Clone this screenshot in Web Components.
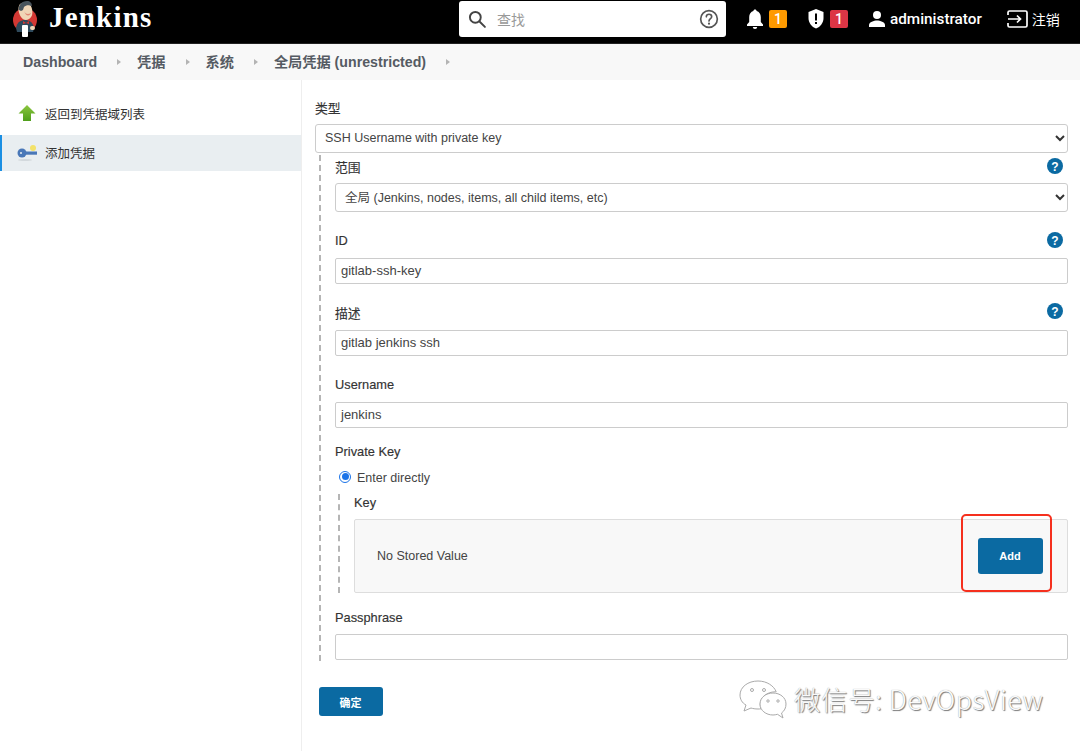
<!DOCTYPE html>
<html lang="zh">
<head>
<meta charset="utf-8">
<title>Jenkins</title>
<style>
  html, body { margin: 0; padding: 0; background: #fff; }
  body {
    width: 1080px; height: 751px; overflow: hidden; position: relative;
    font: 13px "Liberation Sans", "Noto Sans CJK SC", sans-serif; color: #333;
  }
  .page { display: flex; height: 671px; }
</style>
</head>
<body>
<jk-header></jk-header>
<jk-breadcrumb>
  <span>Dashboard</span><span>凭据</span><span>系统</span><span>全局凭据 (unrestricted)</span>
</jk-breadcrumb>
<div class="page">
  <jk-sidebar></jk-sidebar>
  <jk-form></jk-form>
</div>
<jk-watermark></jk-watermark>

<script>
// barra superior negra
class JkHeader extends HTMLElement {
  constructor() {
    super();
    this.attachShadow({ mode: "open" });
    this.shadowRoot.innerHTML = `
    <style>
      :host { display: flex; align-items: center; height: 43px; background: #000; color: #fff; border-bottom: 1px solid #222;
        font-family: Roboto, "Noto Sans CJK SC", sans-serif; }
      .logo { margin-left: 12px; width: 27px; height: 37px; flex: none; margin-top: -4px; }
      .name { margin-left: 10px; width: 104px; font: bold 29px "Liberation Serif", serif; letter-spacing: 1.2px; flex: none; white-space: nowrap; margin-top: -8px; }
      .search { margin-left: 306px; width: 267px; height: 36px; margin-top: -5px; background: #fff; border-radius: 3px; display: flex; align-items: center; flex: none; color: #999; font-size: 14px; }
      .search .mag { margin-left: 8px; }
      .search span { margin-left: 10px; flex: 1; }
      .search .q { margin-right: 7px; }
      .bell { margin-left: 20px; }
      .badge { width: 18px; height: 18px; border-radius: 2px; background: #fe9a00; font: 500 14px/18px Roboto, sans-serif; text-align: center; flex: none; margin-left: 5px; margin-top: -5px; }
      .badge.red { background: #dc3545; }
      .shield { margin-left: 20px; }
      .bell, .shield, .user, .out { flex: none; margin-top: -5px; }
      .user { margin-left: 20px; }
      .who { margin-left: 4px; font-weight: 500; font-size: 15.3px; margin-top: -5px; }
      .out { margin-left: 25px; }
      .quit { margin-left: 4px; font-size: 14px; margin-top: -5px; }
    </style>
    <svg class="logo" viewBox="0 0 27 37">
      <circle cx="13" cy="19" r="12" fill="#d33833"/>
      <path d="M4 27c1-6 5-8 9-8s8 2 9 8l-1 4H5z" fill="#2f4a5c"/>
      <path d="M8 3c4-3 11-2 12 5 1 5 0 8-3 10-3 2-6 1-8-2-2-3-4-9-1-13z" fill="#f0d6b7"/>
      <path d="M7 9C6 4 10 0 15 0c3 0 5 2 5 5-3-1-6-1-8 1l-1 3-2 1z" fill="#49545c"/>
      <path d="M12 10c1 3 4 4 7 2-1 3-5 4-7-2z" fill="#d33833" opacity=".5"/>
      <path d="M11 20l3 2 3-2v3l-3-1-3 1z" fill="#d33833"/>
      <rect x="10" y="24" width="6" height="12" rx="1" fill="#fff"/>
      <rect x="18" y="25" width="5" height="4" rx="2" fill="#f0d6b7"/>
    </svg>
    <div class="name">Jenkins</div>
    <div class="search">
      <svg class="mag" width="20" height="20" viewBox="0 0 24 24" fill="none" stroke="#444" stroke-width="2.3" stroke-linecap="round"><circle cx="10" cy="10" r="6.5"/><path d="M15 15l6.500 6.500"/></svg>
      <span>查找</span>
      <svg class="q" width="20" height="20" viewBox="0 0 24 24" fill="none" stroke="#555" stroke-width="2"><circle cx="12" cy="12" r="10"/><path d="M8.800 9.400c0-1.900 1.400-3.100 3.200-3.100s3.200 1.200 3.200 2.900c0 2.400-3.200 2.500-3.200 5.300" stroke-linecap="round"/><circle cx="12" cy="17.600" r="1.300" fill="#555" stroke="none"/></svg>
    </div>
    <svg class="bell" width="18" height="20" viewBox="0 0 18 20" fill="#fff"><path d="M9 .5c-1 0-1.600.7-1.600 1.600C4.800 2.900 3.200 5.200 3.200 8v5L1 15.600V17h16v-1.400L14.800 13V8c0-2.800-1.600-5.100-4.200-5.900C10.600 1.200 10 .5 9 .5z"/><path d="M6.800 18a2.200 2 0 0 0 4.400 0z"/></svg>
    <div class="badge">1</div>
    <svg class="shield" width="18" height="20" viewBox="0 0 18 20"><path d="M9 0L1.500 3v6c0 5 3.200 9 7.500 10.500C13.300 18 16.500 14 16.500 9V3z" fill="#fff"/><rect x="8" y="4.500" width="2" height="7" fill="#000"/><rect x="8" y="13" width="2" height="2" fill="#000"/></svg>
    <div class="badge red">1</div>
    <svg class="user" width="18" height="18" viewBox="0 0 18 18" fill="#fff"><circle cx="9" cy="5" r="4"/><path d="M1 17v-2c0-3 5-4.500 8-4.500s8 1.500 8 4.500v2z"/></svg>
    <div class="who">administrator</div>
    <svg class="out" width="21" height="18" viewBox="0 0 21 18" fill="none" stroke="#fff" stroke-width="1.700"><path d="M1 5V2.500A1.500 1.500 0 0 1 2.500 1h16A1.500 1.500 0 0 1 20 2.500v13a1.500 1.500 0 0 1-1.500 1.500h-16A1.500 1.500 0 0 1 1 15.500V13"/><path d="M1 9h12M10 5.500L13.500 9 10 12.500"/></svg>
    <div class="quit">注销</div>
    `;
  }
}

// migas de pan
class JkBreadcrumb extends HTMLElement {
  constructor() {
    super();
    this.attachShadow({ mode: "open" });
    this.shadowRoot.innerHTML = `
    <style>
      :host { display: block; height: 36px; background: #f8f8f8; }
      slot { display: flex; align-items: center; height: 36px; padding-left: 23px; font: bold 14.2px/36px "Liberation Sans", "Noto Sans CJK SC", sans-serif; color: #555b63; }
      ::slotted(span) { margin-right: 39px; }
    </style>
    <slot></slot>
    `;
    // las flechitas van en el documento porque ::after no cruza el slot
    this.querySelectorAll("span").forEach((s) => {
      s.insertAdjacentHTML("afterend", `<jk-chevron></jk-chevron>`);
    });
  }
}

class JkChevron extends HTMLElement {
  constructor() {
    super();
    this.attachShadow({ mode: "open" });
    this.shadowRoot.innerHTML = `
    <style>
      :host { display: block; width: 4px; height: 7px; margin: 0 16px 0 -19px; }
      i { display: block; width: 0; height: 0; border-left: 4px solid #b4b4b4; border-top: 3.5px solid transparent; border-bottom: 3.5px solid transparent; }
    </style>
    <i></i>
    `;
  }
}

// columna izquierda
class JkSidebar extends HTMLElement {
  constructor() {
    super();
    this.attachShadow({ mode: "open" });
    this.shadowRoot.innerHTML = `
    <style>
      :host { display: block; width: 301px; flex: none; border-right: 1px solid #eee; padding-top: 15px; box-sizing: content-box; }
      .item { display: flex; align-items: center; height: 36px; padding-left: 16px; gap: 7px; font-size: 12.5px; color: #333; border-left: 2px solid transparent; }
      .item.active { background: #e9eef1; border-left-color: #1b8fe3; margin-top: 4px; }
      .item.active span { margin-top: -2px; }
      .item svg { flex: none; width: 22px; height: 20px; margin-left: -2px; }
    </style>
    <div class="item">
      <svg viewBox="0 0 22 20">
        <defs><linearGradient id="up" x1="0" y1="0" x2="0" y2="1"><stop offset="0" stop-color="#8cc63f"/><stop offset="1" stop-color="#4f9e1b"/></linearGradient></defs>
        <path d="M11 2l8.500 8.500H15V18H7v-7.500H2.500z" fill="url(#up)"/>
      </svg>
      <span>返回到凭据域列表</span>
    </div>
    <div class="item active">
      <svg viewBox="0 0 22 20"><circle cx="17" cy="5" r="3" fill="#f3e26a"/><circle cx="6" cy="10" r="4.500" fill="#4a78b8"/><rect x="8" y="8.500" width="13" height="3.200" fill="#4a78b8"/><circle cx="5" cy="10" r="1" fill="#e9eef1"/><ellipse cx="9" cy="17" rx="7" ry="1" fill="#d3d9dd"/></svg>
      <span>添加凭据</span>
    </div>
    `;
  }
}

// etiqueta + control, con ayuda opcional
class JkField extends HTMLElement {
  constructor() {
    super();
    this.attachShadow({ mode: "open" });
    const help = this.hasAttribute("help")
      ? `<svg width="16" height="16" viewBox="0 0 16 16"><circle cx="8" cy="8" r="8" fill="#0b6aa2"/><text x="8" y="12.500" text-anchor="middle" font-family="Liberation Sans" font-weight="700" font-size="12" fill="#fff">?</text></svg>`
      : "";
    this.shadowRoot.innerHTML = `
    <style>
      :host { display: block; }
      .top { display: flex; justify-content: space-between; align-items: center; height: 18px; margin-bottom: var(--gap, 7px); padding-right: 5px; }
      label { font-size: 12.8px; color: #333; -webkit-text-stroke: .15px #333; margin-top: -2px; }
      svg { margin-top: var(--help, -2px); }
    </style>
    <div class="top"><label>${this.getAttribute("label")}</label>${help}</div>
    <slot></slot>
    `;
  }
}

class JkSelect extends HTMLElement {
  constructor() {
    super();
    this.attachShadow({ mode: "open" });
    this.shadowRoot.innerHTML = `
    <style>
      :host { display: flex; align-items: center; justify-content: space-between; height: 29px; box-sizing: border-box; border: 1px solid #ccc; border-radius: 3px; padding: 0 2px 2px var(--pad, 9px); background: #fff; color: #444; font-size: 12.5px; }
      svg { flex: none; margin-top: 2px; }
    </style>
    <slot></slot>
    <svg width="10" height="7" viewBox="0 0 10 7" fill="none" stroke="#333" stroke-width="2"><path d="M1 1l4 4 4-4"/></svg>
    `;
  }
}

class JkInput extends HTMLElement {
  constructor() {
    super();
    this.attachShadow({ mode: "open" });
    this.shadowRoot.innerHTML = `
    <style>
      :host { display: flex; align-items: center; height: 26px; box-sizing: border-box; border: 1px solid #ccc; border-radius: 2px; padding: 0 5px 2px; background: #fff; color: #444; font-size: 13px; }
    </style>
    <slot></slot>
    `;
  }
}

class JkButton extends HTMLElement {
  constructor() {
    super();
    this.attachShadow({ mode: "open" });
    this.shadowRoot.innerHTML = `
    <style>
      :host { display: flex; align-items: center; justify-content: center; box-sizing: border-box; background: #0b6aa2; border-radius: 3px; color: #fff; font-size: 11px; font-weight: 700; padding-right: 1px; }
    </style>
    <slot></slot>
    `;
  }
}

// el formulario
class JkForm extends HTMLElement {
  constructor() {
    super();
    this.attachShadow({ mode: "open" });
    this.shadowRoot.innerHTML = `
    <style>
      :host { display: block; flex: 1; padding: 19px 12px 0 13px; box-sizing: border-box; --pad: 9px; }
      .nest { margin: 2px 0 0 4px; padding: 3px 0 0 14px; border-left: 2px dashed #b5b5b5; height: 506px; box-sizing: border-box; }
      jk-field { margin-top: 20px; }
      jk-field.first { margin-top: 0; }
      .radio { display: flex; align-items: center; height: 18px; margin: 8px 0 0 4px; gap: 6px; color: #444; font-size: 12.5px; }
      .dot { width: 12px; height: 12px; border-radius: 50%; background: #fff; border: 1.500px solid #1a73e8; box-sizing: border-box; display: flex; align-items: center; justify-content: center; margin-top: -3px; }
      .dot i { display: block; width: 7px; height: 7px; border-radius: 50%; background: #1a73e8; }
      .sub { margin: 7px 0 0 3px; padding-left: 14px; border-left: 2px dashed #b5b5b5; }
      .box { position: relative; height: 74px; box-sizing: border-box; border: 1px solid #ddd; border-radius: 2px; background: #f8f8f8; display: flex; align-items: center; justify-content: space-between; padding: 0 24px 0 22px; color: #444; font-size: 12.5px; }
      .box jk-button { width: 65px; height: 36px; }
      .mark { position: absolute; left: 606px; top: -6px; width: 91px; height: 78px; box-sizing: border-box; border: 2px solid #f5301e; border-radius: 5px; }
      .ok { margin: 26px 0 0 4px; width: 64px; height: 29px; }
    </style>
    <jk-field class="first" label="类型" style="--gap:7px">
      <jk-select>SSH Username with private key</jk-select>
    </jk-field>
    <div class="nest">
      <jk-field class="first" label="范围" help>
        <jk-select>全局 (Jenkins, nodes, items, all child items, etc)</jk-select>
      </jk-field>
      <jk-field label="ID" help style="--gap:8px"><jk-input>gitlab-ssh-key</jk-input></jk-field>
      <jk-field label="描述" help style="--gap:8px;--help:-5px"><jk-input>gitlab jenkins ssh</jk-input></jk-field>
      <jk-field label="Username" style="--gap:8px"><jk-input>jenkins</jk-input></jk-field>
      <jk-field label="Private Key" style="margin-top:15px">
        <div class="radio"><span class="dot"><i></i></span><span>Enter directly</span></div>
        <div class="sub">
          <jk-field class="first" label="Key">
            <div class="box">
              <span>No Stored Value</span>
              <jk-button>Add</jk-button>
              <div class="mark"></div>
            </div>
          </jk-field>
        </div>
      </jk-field>
      <jk-field label="Passphrase" style="margin-top:16px"><jk-input></jk-input></jk-field>
    </div>
    <jk-button class="ok">确定</jk-button>
    `;
  }
}

// marca de agua de WeChat
class JkWatermark extends HTMLElement {
  constructor() {
    super();
    this.attachShadow({ mode: "open" });
    this.shadowRoot.innerHTML = `
    <style>
      :host { position: absolute; left: 739px; top: 680px; display: flex; align-items: center; gap: 7px; }
      span { font: 300 26.5px "Noto Sans CJK SC", sans-serif; color: #fafafa; text-shadow: 1px 1px 1px #777, 0 0 1px #999; letter-spacing: .6px; white-space: nowrap; margin-top: -6px; }
    </style>
    <svg width="48" height="42" viewBox="0 0 48 42" fill="#fff" stroke="#aaa" stroke-width="1"><path d="M19 1C9 1 1 7 1 15c0 4 2 8 6 10l-2 6 7-3c2 .6 4 1 7 1 1 0 2 0 3-.2-.5-1.500-.8-3-.8-4.500 0-7 7-12.500 15-12.500h1C35 6 28 1 19 1z"/><path d="M47 24c0-6.500-6-11-13-11s-13 4.500-13 11 6 11 13 11c1.500 0 3-.3 4.500-.7L44 38l-1.500-5c3-2 4.500-5.500 4.500-9z"/><circle cx="13" cy="10" r="1.500"/><circle cx="25" cy="10" r="1.500"/><circle cx="29" cy="21" r="1.200"/><circle cx="39" cy="21" r="1.200"/></svg>
    <span>微信号: DevOpsView</span>
    `;
  }
}

customElements.define("jk-header", JkHeader);
customElements.define("jk-chevron", JkChevron);
customElements.define("jk-breadcrumb", JkBreadcrumb);
customElements.define("jk-sidebar", JkSidebar);
customElements.define("jk-field", JkField);
customElements.define("jk-select", JkSelect);
customElements.define("jk-input", JkInput);
customElements.define("jk-button", JkButton);
customElements.define("jk-form", JkForm);
customElements.define("jk-watermark", JkWatermark);
</script>
</body>
</html>
